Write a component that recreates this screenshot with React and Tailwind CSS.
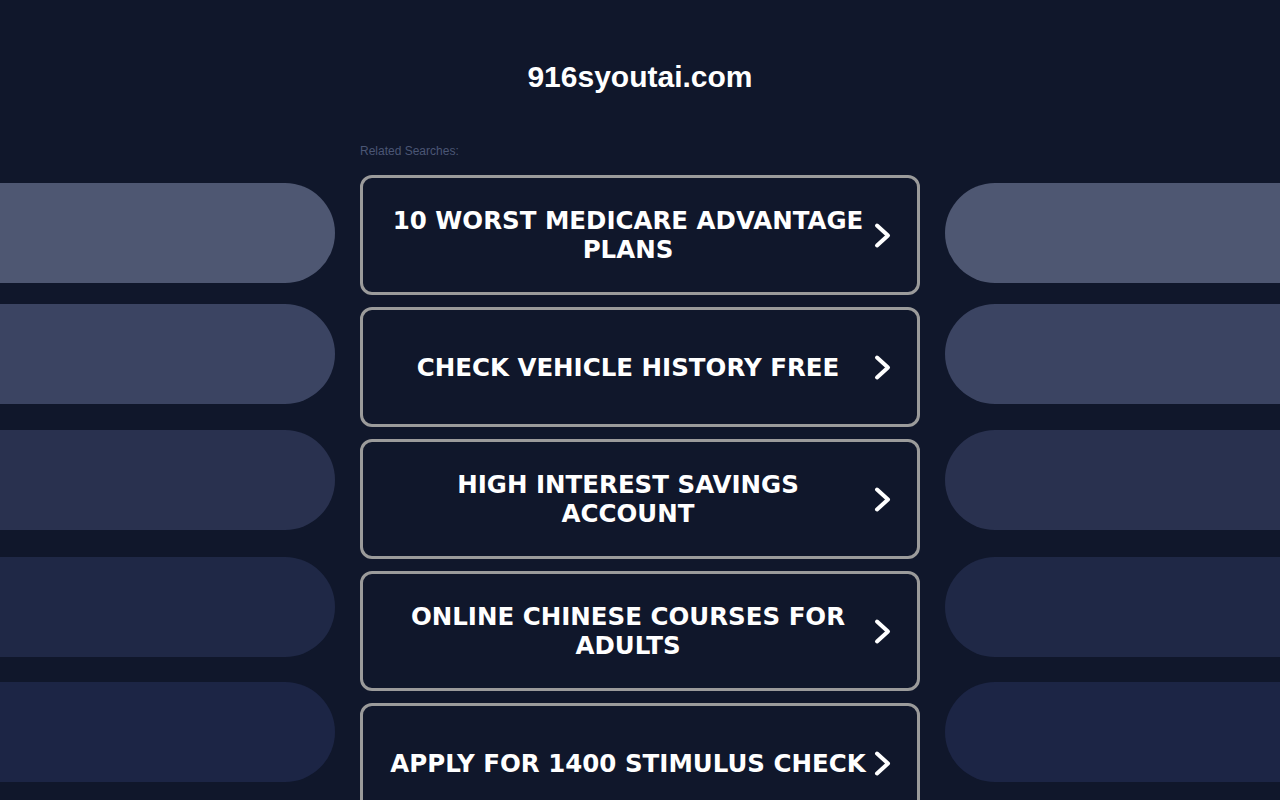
import React from 'react';

const searches = [
  '10 WORST MEDICARE ADVANTAGE PLANS',
  'CHECK VEHICLE HISTORY FREE',
  'HIGH INTEREST SAVINGS ACCOUNT',
  'ONLINE CHINESE COURSES FOR ADULTS',
  'APPLY FOR 1400 STIMULUS CHECK',
];

// decorative side pills, top to bottom
const leftPills = [
  'mt-0 bg-[#4e5772]',
  'mt-[21px] bg-[#3b4462]',
  'mt-[26px] bg-[#29314f]',
  'mt-[27px] bg-[#1f2846]',
  'mt-[25px] bg-[#1c2545]',
];

function Chevron() {
  return (
    <svg width="20" height="27" viewBox="0 0 20 27" fill="none" className="shrink-0">
      <polyline points="4,3.5 15,13.5 4,23.5" stroke="#ffffff" strokeWidth="4" strokeLinecap="round" strokeLinejoin="round" />
    </svg>
  );
}

function SearchButton({ label }) {
  return (
    <a
      href="#"
      className="flex items-center h-[120px] border-[3px] border-[#9b9b9b] rounded-[12px] pl-[26px] pr-6 gap-[6px] mb-3"
    >
      <span className="flex-1 text-center text-white font-bold text-[24.5px] leading-[29px] font-['DejaVu_Sans',sans-serif]">
        {label}
      </span>
      <Chevron />
    </a>
  );
}

export default function App() {
  return (
    <div className="min-h-screen h-[800px] overflow-hidden bg-[#10172b] font-['Liberation_Sans',Arial,sans-serif]">
      <h1 className="pt-[59px] text-center text-white font-bold text-[30px] leading-[36px]">
        916syoutai.com
      </h1>

      <div className="mt-[49px] grid grid-cols-[335px_560px_335px] gap-x-[25px]">
        <div className="pt-[39px] flex flex-col">
          {leftPills.map((c, i) => (
            <div key={i} className={`h-[100px] rounded-r-[50px] ${c}`} />
          ))}
        </div>

        <div>
          <div className="text-[12px] leading-[14px] text-[#4b5675] mb-[17px]">Related Searches:</div>
          {searches.map((s) => (
            <SearchButton key={s} label={s} />
          ))}
        </div>

        <div className="pt-[39px] flex flex-col">
          {leftPills.map((c, i) => (
            <div key={i} className={`h-[100px] rounded-l-[50px] ${c}`} />
          ))}
        </div>
      </div>
    </div>
  );
}
